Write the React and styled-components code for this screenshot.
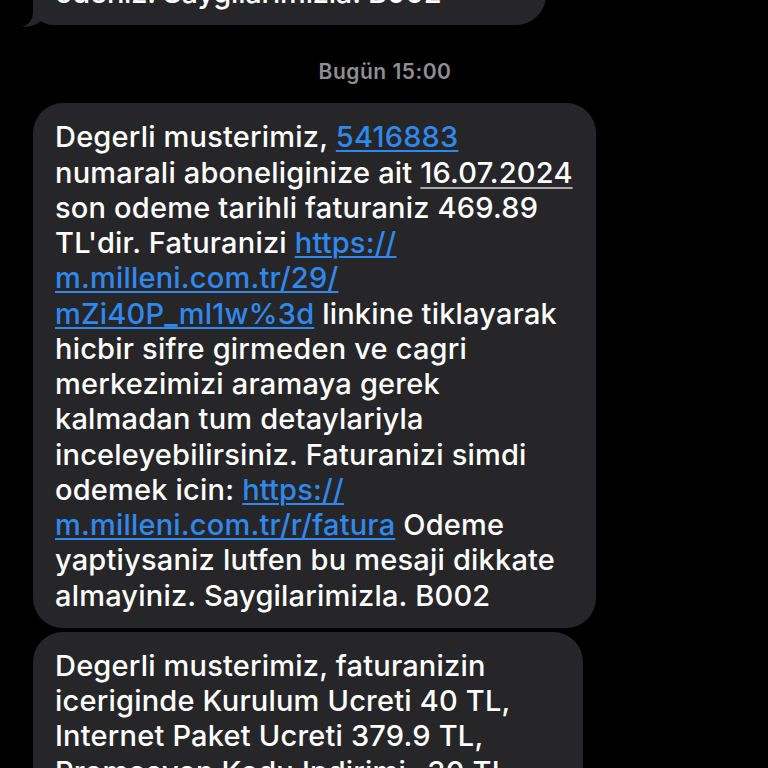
import React from "react";
import styled, { createGlobalStyle } from "styled-components";

const Global = createGlobalStyle`
  html, body { margin: 0; padding: 0; background: #000; }
  body { width: 768px; height: 768px; overflow: hidden; }
  #root { width: 768px; height: 768px; overflow: hidden; }
`;

const Feed = styled.div`
  display: flex;
  flex-direction: column;
  align-items: flex-start;
  margin-top: -41px;
  font-family: Inter, "Open Sans", sans-serif;
`;

const Bubble = styled.div`
  position: relative;
  box-sizing: border-box;
  width: ${(p) => p.$w}px;
  margin-left: 33px;
  margin-top: ${(p) => p.$gap || 0}px;
  padding: 16px 20px 15px 22px;
  background: #262628;
  border-radius: 30px;
  border-bottom-left-radius: ${(p) => (p.$tail ? 20 : 30)}px;
  color: #fff;
  font-size: 29px;
  font-weight: 500;
  line-height: 35.25px;
  letter-spacing: ${(p) => (p.$tight ? -0.2 : 0.2)}px;
  white-space: nowrap;
`;

const Tail = styled.svg`
  position: absolute;
  left: -13px;
  bottom: -2px;
  width: 30px;
  height: 24px;
`;

const Link = styled.span`
  color: #2f88ed;
  text-decoration: underline;
  text-decoration-thickness: 2px;
  text-underline-offset: 3px;
`;

const DateMark = styled.span`
  text-decoration: underline;
  text-decoration-color: #a8a8ad;
  text-decoration-thickness: 2px;
  text-underline-offset: 4px;
`;

const Stamp = styled.div`
  align-self: stretch;
  text-align: center;
  margin: 35px 0 20px 0;
  padding-left: 2px;
  color: #8e8e93;
  font-size: 21px;
  line-height: 23px;
  font-weight: 600;
  letter-spacing: 0.5px;
`;

export default function App() {
  return (
    <>
      <Global />
      <Feed>
        <Bubble $w={513} $tail $tight>
          odeniz. Saygilarimizla. B002
          <Tail viewBox="0 0 30 24">
            <path
              d="M13 0 L13 9 C13 16 9 22 2 24 C10 24.5 17 21 23 17 L30 17 L30 0 Z"
              fill="#262628"
            />
          </Tail>
        </Bubble>
        <Stamp>Bugün 15:00</Stamp>
        <Bubble $w={563}>
          Degerli musterimiz, <Link>5416883</Link>
          <br />
          numarali aboneliginize ait <DateMark>16.07.2024</DateMark>
          <br />
          son odeme tarihli faturaniz 469.89
          <br />
          TL'dir. Faturanizi <Link>https://</Link>
          <br />
          <Link>m.milleni.com.tr/29/</Link>
          <br />
          <Link>mZi40P_ml1w%3d</Link> linkine tiklayarak
          <br />
          hicbir sifre girmeden ve cagri
          <br />
          merkezimizi aramaya gerek
          <br />
          kalmadan tum detaylariyla
          <br />
          inceleyebilirsiniz. Faturanizi simdi
          <br />
          odemek icin: <Link>https://</Link>
          <br />
          <Link>m.milleni.com.tr/r/fatura</Link> Odeme
          <br />
          yaptiysaniz lutfen bu mesaji dikkate
          <br />
          almayiniz. Saygilarimizla. B002
        </Bubble>
        <Bubble $w={550} $gap={4}>
          Degerli musterimiz, faturanizin
          <br />
          iceriginde Kurulum Ucreti 40 TL,
          <br />
          Internet Paket Ucreti 379.9 TL,
          <br />
          Promosyon Kodu Indirimi -30 TL
          <br />
          ile birlikte toplam 469.89 TL
        </Bubble>
      </Feed>
    </>
  );
}
